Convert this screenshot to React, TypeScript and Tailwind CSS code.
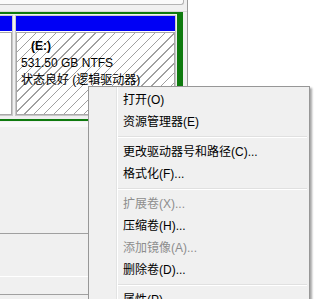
import React from "react";

type Item = { label: string; disabled?: boolean } | "sep";

const menuItems: Item[] = [
  { label: "打开(O)" },
  { label: "资源管理器(E)" },
  "sep",
  { label: "更改驱动器号和路径(C)..." },
  { label: "格式化(F)..." },
  "sep",
  { label: "扩展卷(X)...", disabled: true },
  { label: "压缩卷(H)..." },
  { label: "添加镜像(A)...", disabled: true },
  { label: "删除卷(D)..." },
  "sep",
  { label: "属性(P)" },
];

function ContextMenu() {
  return (
    <div className="absolute left-[88px] top-[86px] w-[222px] border border-[#979797] bg-[linear-gradient(to_right,#f0f0f0_27px,#e2e3e3_27px,#e2e3e3_28px,#ffffff_28px,#ffffff_29px,#f0f0f0_29px)] pt-[2px] shadow-[2px_2px_2px_rgba(0,0,0,0.35)]">
      {menuItems.map((item, i) =>
        item === "sep" ? (
          <div key={i} className="flex h-[8px] items-center pl-[29px] pr-[2px]">
            <div className="h-[2px] w-full border-t border-b border-t-[#e0e0e0] border-b-white" />
          </div>
        ) : (
          <div
            key={i}
            className={`flex h-[22px] items-center pl-[34px] text-[12px] leading-none ${item.disabled ? "text-[#8d8d8d]" : "text-black"}`}
          >
            {item.label}
          </div>
        )
      )}
    </div>
  );
}

function Partition({ width, selected, children }: { width: string; selected?: boolean; children?: React.ReactNode }) {
  return (
    <div className={`flex shrink-0 flex-col border border-[#c8c8c8] bg-white ${width}`}>
      <div className="h-[15px] bg-[#0000f5]" />
      <div
        className={`mt-[1px] flex-1 border border-[#a8a8a8] ${
          selected
            ? "bg-[repeating-linear-gradient(135deg,#ffffff_0px,#ffffff_6px,#a0a0a0_6px,#a0a0a0_7px)]"
            : "bg-white"
        }`}
      >
        {children}
      </div>
    </div>
  );
}

export default function App() {
  return (
    <div className="relative flex h-[299px] w-[335px] overflow-hidden bg-white font-['Liberation_Sans','Noto_Sans_CJK_SC',sans-serif]">
      <div className="flex w-[188px] shrink-0 flex-col border-r border-[#9a9a9a] bg-[#f0f0f0]">
        <div className="h-[5px] w-[184px] rounded-br-[3px] border-b border-r border-[#b4b4b4] bg-[#fafafa]" />
        <div className="h-[7px] border-b border-[#d8d8d8]" />
        <div className="ml-[-4px] mr-[4px] flex h-[109px] gap-[2px] border-t-2 border-r-[6px] border-b-2 border-[#0e7a0e] pt-[1px] pr-[1px] pb-[3px]">
          <Partition width="w-[17px]" />
          <Partition width="w-[161px]" selected>
            <div className="pl-[4px] pt-[5px] text-[12px] leading-[17px] text-black">
              <div className="pl-[10px] font-bold">(E:)</div>
              <div>531.50 GB NTFS</div>
              <div className="whitespace-nowrap">状态良好 (逻辑驱动器)</div>
            </div>
          </Partition>
        </div>
        <div className="mt-[1px] h-[5px] bg-[#f8f8f8]" />
        <div className="h-[107px] border-b border-[#a0a0a0]" />
        <div className="h-[43px] border-b border-white" />
        <div className="h-[18px] border-b border-[#a0a0a0]" />
      </div>
      <div className="flex-1 bg-white" />
      <ContextMenu />
    </div>
  );
}
